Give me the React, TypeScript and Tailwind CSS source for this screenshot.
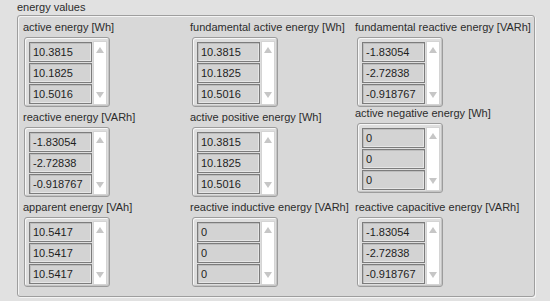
import React from "react";

type Ctl = { label: string; values: string[] };

const cols: { w: string; ml: string; items: (Ctl & { mt: string })[] }[] = [
  {
    w: "w-[167px]",
    ml: "ml-[1px]",
    items: [
      { label: "active energy [Wh]", values: ["10.3815", "10.1825", "10.5016"], mt: "mt-0" },
      { label: "reactive energy [VARh]", values: ["-1.83054", "-2.72838", "-0.918767"], mt: "mt-[3px]" },
      { label: "apparent energy [VAh]", values: ["10.5417", "10.5417", "10.5417"], mt: "mt-[3px]" },
    ],
  },
  {
    w: "w-[165px]",
    ml: "ml-[2px]",
    items: [
      { label: "fundamental active energy [Wh]", values: ["10.3815", "10.1825", "10.5016"], mt: "mt-0" },
      { label: "active positive energy [Wh]", values: ["10.3815", "10.1825", "10.5016"], mt: "mt-[3px]" },
      { label: "reactive inductive energy [VARh]", values: ["0", "0", "0"], mt: "mt-[3px]" },
    ],
  },
  {
    w: "w-[160px]",
    ml: "ml-[2px]",
    items: [
      { label: "fundamental reactive energy [VARh]", values: ["-1.83054", "-2.72838", "-0.918767"], mt: "mt-0" },
      { label: "active negative energy [Wh]", values: ["0", "0", "0"], mt: "-mt-[1px]" },
      { label: "reactive capacitive energy [VARh]", values: ["-1.83054", "-2.72838", "-0.918767"], mt: "mt-[7px]" },
    ],
  },
];

function Arrow({ up }: { up: boolean }) {
  return (
    <svg width="8" height="6" viewBox="0 0 8 6">
      {up ? <polygon points="4,0 8,6 0,6" fill="#c6c6c6" /> : <polygon points="0,0 8,0 4,6" fill="#c6c6c6" />}
    </svg>
  );
}

function ArrayControl({ values, ml }: { values: string[]; ml: string }) {
  return (
    <div
      className={`${ml} w-[86px] h-[70px] rounded-[3px] border border-[#9c9c9c] bg-[#dedede] shadow-[inset_1px_1px_0_#f7f7f7,inset_-1px_-1px_0_#c4c4c4] flex pt-[4px] pl-[4px]`}
    >
      <div className="flex flex-col gap-[1px] w-[63px]">
        {values.map((v, i) => (
          <div
            key={i}
            className="h-[20px] border border-[#7c7c7c] bg-[#d3d3d3] shadow-[inset_1px_1px_0_#bdbdbd,inset_-1px_-1px_0_#e6e6e6] flex items-center pl-[3px] leading-[13px] text-[#1e1e1e]"
          >
            {v}
          </div>
        ))}
      </div>
      <div className="ml-[1px] -mt-[1px] w-[14px] h-[64px] bg-white border border-[#d4d4d4] flex flex-col items-center justify-between pt-[5px] pb-[6px]">
        <Arrow up />
        <Arrow up={false} />
      </div>
    </div>
  );
}

export default function App() {
  return (
    <div className="w-[550px] h-[301px] bg-[#e1e1e1] font-['Liberation_Sans',Arial,sans-serif] text-[11px] text-[#2c2c2c] overflow-hidden">
      <div className="h-[15px] pl-[17px] pt-[1px] leading-[13px]">energy values</div>
      <div className="ml-[17px] w-[518px] h-[282px] rounded-[3px] border border-[#9e9e9e] bg-[#d8d8d8] shadow-[inset_1px_1px_0_#f4f4f4,1px_1px_0_#f4f4f4] flex pl-[5px] pt-[4px]">
        {cols.map((c, ci) => (
          <div key={ci} className={`${c.w} flex flex-col`}>
            {c.items.map((it, ii) => (
              <div key={ii} className={`${it.mt} flex flex-col`}>
                <div className="h-[17px] leading-[13px] pt-[1px] whitespace-nowrap">{it.label}</div>
                <ArrayControl values={it.values} ml={c.ml} />
              </div>
            ))}
          </div>
        ))}
      </div>
    </div>
  );
}
